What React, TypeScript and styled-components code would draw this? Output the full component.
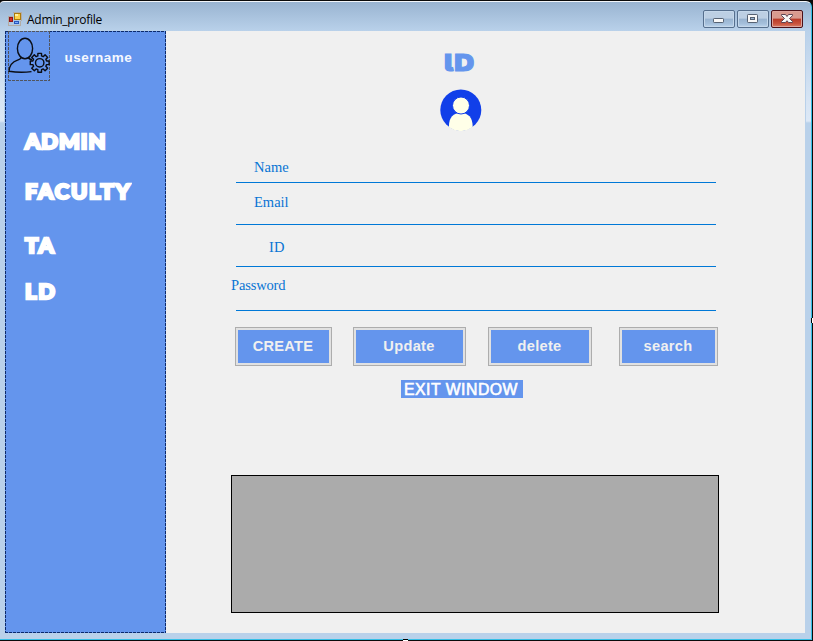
import React from "react";
import styled, { createGlobalStyle } from "styled-components";

const Global = createGlobalStyle`
  * { box-sizing: border-box; }
  body { margin: 0; overflow: hidden; background: #000; }
`;

const Window = styled.div`
  position: relative;
  width: 813px;
  height: 641px;
  padding: 1px 1px 1px 0;
  background: #0a0a0a;
`;

const Frame = styled.div`
  height: 639px;
  display: flex;
  flex-direction: column;
  padding: 0 6px 6px 5px;
  border-top: 1px solid #f2f6fa;
  border-right: 1px solid #35bfe6;
  border-bottom: 1px solid #35bfe6;
  border-radius: 4px 6px 0 0;
  background:
    linear-gradient(#99b4d1, #b9d1ea 29px, #d8e5f4 100px, #dce8f6 119px, transparent 121px) 0 0 / 4px 121px no-repeat,
    linear-gradient(#99b4d1, #b9d1ea 29px, #d8e5f4 100px, #dce8f6 119px, transparent 121px) right 0 top 0 / 5px 121px no-repeat,
    linear-gradient(#99b4d1, #b9d1ea 29px);
`;

const TitleBar = styled.header`
  height: 29px;
  flex: none;
  display: flex;
  align-items: flex-start;
  padding: 8px 2px 0 3px;
`;

const FormIconSlot = styled.span`
  display: flex;
  margin-top: 2px;
`;

const Caption = styled.span`
  flex: 1;
  margin: 1px 0 0 5px;
  font: 12px/18px "Open Sans", sans-serif;
  letter-spacing: -0.22px;
  color: #000;
`;

const CaptionButtons = styled.div`
  display: flex;
  gap: 2px;
`;

const CaptionButton = styled.button<{ $close?: boolean }>`
  width: 32px;
  height: 18px;
  padding: 0;
  display: flex;
  border: 1px solid ${(p) => (p.$close ? "#4c1018" : "#566f8d")};
  border-radius: 2px;
  box-shadow: inset 0 0 0 1px ${(p) => (p.$close ? "#dda49d" : "#c5d8eb")};
  background: ${(p) =>
    p.$close
      ? "linear-gradient(#d99a8f 0 45%, #b93a28 50%, #c9543f 80%, #d98068)"
      : "linear-gradient(#bccfe3 0 45%, #98b3d0 50%, #a5c0dc 80%, #bdd5ec)"};
`;

const Client = styled.div`
  flex: 1;
  display: flex;
  background: #f0f0f0;
`;

const dash = "#0b2a6b 0 3px, #6495ed 3px 4px";
const Sidebar = styled.aside`
  width: 161px;
  padding: 0 0 0 3px;
  background:
    repeating-linear-gradient(90deg, ${dash}) 0 0 / 100% 1px no-repeat,
    repeating-linear-gradient(90deg, ${dash}) 0 100% / 100% 1px no-repeat,
    repeating-linear-gradient(180deg, ${dash}) 0 0 / 1px 100% no-repeat,
    repeating-linear-gradient(180deg, ${dash}) 100% 0 / 1px 100% no-repeat,
    #6495ed;
`;

const User = styled.div`
  display: flex;
  height: 50px;
`;

const gdash = "#51555e 0 3px, #6495ed 3px 4px";
const UserPicture = styled.div`
  width: 42px;
  height: 50px;
  background:
    repeating-linear-gradient(90deg, ${gdash}) 0 0 / 100% 1px no-repeat,
    repeating-linear-gradient(90deg, ${gdash}) 0 100% / 100% 1px no-repeat,
    repeating-linear-gradient(180deg, ${gdash}) 0 0 / 1px 100% no-repeat,
    repeating-linear-gradient(180deg, ${gdash}) 100% 0 / 1px 100% no-repeat;
`;

const UserName = styled.span`
  margin: 18px 0 0 14.5px;
  font: bold 13.5px/17px "Liberation Sans", Arial, sans-serif;
  letter-spacing: 0.5px;
  color: #f5f8ff;
`;

const NavItem = styled.div<{ $top: number; $spacing: number }>`
  height: 26px;
  width: fit-content;
  margin: ${(p) => p.$top}px 0 0 17px;
  font: 900 20.5px/26px Lato, sans-serif;
  letter-spacing: ${(p) => p.$spacing}px;
  white-space: nowrap;
  color: #fff;
  -webkit-text-stroke: 2.4px #fff;
  transform: scaleX(1.07);
  transform-origin: 0 0;
`;

const Main = styled.main`
  flex: 1;
  padding: 19px 0 0 65px;
`;

const Heading = styled.h1`
  width: fit-content;
  margin: 0 0 0 213px;
  height: 26px;
  font: 900 23px/27px Inter, sans-serif;
  font-feature-settings: "cv05";
  letter-spacing: 0.8px;
  color: #6495ed;
  -webkit-text-stroke: 1px #6495ed;
  transform: scaleX(1.2);
  transform-origin: 0 0;
`;

const Avatar = styled.svg`
  display: block;
  margin: 13px 0 21px 209px;
`;

const Field = styled.div<{ $height: number; $top: number; $indent: number }>`
  display: flex;
  flex-direction: column;
  justify-content: space-between;
  width: 485px;
  height: ${(p) => p.$height}px;
  padding-top: ${(p) => p.$top}px;
  label { margin-left: ${(p) => p.$indent}px; }
`;

const Underline = styled.div`
  height: 1px;
  margin-left: 5px;
  background: #0078d7;
`;

const Label = styled.label<{ $spacing: number }>`
  display: block;
  font: 14.5px/18px "Liberation Serif", serif;
  letter-spacing: ${(p) => p.$spacing}px;
  color: #0874d4;
`;

const Actions = styled.div`
  display: grid;
  grid-template-columns: 97px 113px 104px 99px;
  column-gap: 21px;
  margin: 16px 0 0 4px;
  & > :nth-child(3) { margin-left: 1px; margin-right: -1px; }
  & > :nth-child(4) { margin-left: 7px; margin-right: -7px; }
`;

const ActionButton = styled.button`
  height: 39px;
  padding: 0 1px 1px 0;
  border: 1px solid #adadad;
  box-shadow: inset 0 0 0 2px #e1e1e1;
  background: #6495ed;
  color: #f0f0f0;
  font: bold 14.6px/18px "Liberation Sans", Arial, sans-serif;
  letter-spacing: 0.3px;
`;

const ExitLabel = styled.div`
  width: 122px;
  height: 18px;
  margin: 14px 0 0 170px;
  padding-left: 3px;
  background: #6495ed;
  color: #fff;
  font: 15.8px/19px "Liberation Sans", Arial, sans-serif;
  -webkit-text-stroke: 0.6px #fff;
  letter-spacing: 0.5px;
  white-space: nowrap;
`;

const DataGrid = styled.div`
  width: 488px;
  height: 138px;
  margin-top: 77px;
  border: 1px solid #000;
  background: #ababab;
`;

const Handle = styled.i<{ $x: number; $y: number; $w: number; $h: number }>`
  position: absolute;
  left: ${(p) => p.$x}px;
  top: ${(p) => p.$y}px;
  width: ${(p) => p.$w}px;
  height: ${(p) => p.$h}px;
  border: solid #000;
  border-width: ${(p) => (p.$w > p.$h ? "1px 0 0" : "0 0 0 1px")};
  background: #fff;
`;

function FormIcon() {
  return (
    <svg width="14" height="14" viewBox="0 0 14 14" shapeRendering="crispEdges">
      <path d="M.5 4.5h4M.5 4v9.5h12V9M5 .5h8v8" fill="none" stroke="#b3aca5" />
      <rect x="6.5" y="1.5" width="6" height="6" fill="#fbd14b" stroke="#ad7b0b" />
      <path d="M7 2h3v2H7z" fill="#fff0a0" />
      <rect x="1.5" y="5.5" width="3" height="4" fill="#d92c25" stroke="#901517" />
      <rect x="6.5" y="9.5" width="4" height="2" fill="#7cacff" stroke="#2858bf" />
    </svg>
  );
}

function MinimizeIcon() {
  return (
    <svg width="30" height="16" viewBox="0 0 30 16">
      <rect x="9.5" y="7.5" width="10" height="4" rx="0.7" fill="#f8f8f8" stroke="#566273" />
    </svg>
  );
}

function MaximizeIcon() {
  return (
    <svg width="30" height="16" viewBox="0 0 30 16">
      <rect x="9.5" y="3.5" width="10" height="8" rx="0.7" fill="#f8f8f8" stroke="#566273" />
      <rect x="12.5" y="6.5" width="4" height="2" fill="#9cb6d3" stroke="#566273" />
    </svg>
  );
}

function CloseIcon() {
  return (
    <svg width="30" height="16" viewBox="0 0 30 16">
      <path
        d="M9.5 3.5h4l1.5 2 1.5-2h4v1.2L17.5 7.5l3 3v1h-4L15 9.7l-1.5 1.8h-4v-1l3-3-3-3z"
        fill="#f8f8f8"
        stroke="#5d4452"
      />
    </svg>
  );
}

const gear = (() => {
  const points: string[] = [];
  for (let i = 0; i < 8; i++) {
    const at = (deg: number, r: number) => {
      const a = ((i * 45 + deg) * Math.PI) / 180;
      return `${(31.7 + r * Math.cos(a)).toFixed(2)},${(31.8 + r * Math.sin(a)).toFixed(2)}`;
    };
    points.push(at(-15, 7.1), at(-11, 9.6), at(11, 9.6), at(15, 7.1));
  }
  return points.join(" ");
})();

function UserGearIcon() {
  return (
    <svg width="42" height="50" viewBox="0 0 42 50" fill="none" stroke="#0a0d14" strokeWidth="1.4">
      <ellipse cx="17" cy="17.5" rx="7.6" ry="10.2" />
      <path d="M13 26.5c0 1.5-1.5 2-3.5 2.7C3.5 31.2 1.5 34.5 1 40.2c7.5 1.3 15 1.4 22.5.4M20.5 26.5c.3 1.5 1.5 1.8 3.5 2.3" />
      <polygon points={gear} strokeLinejoin="round" />
      <circle cx="31.7" cy="31.8" r="4.2" />
    </svg>
  );
}

const fields = [
  { name: "Name", height: 31, top: 6, indent: 23, spacing: 0.05 },
  { name: "Email", height: 42, top: 10, indent: 23, spacing: 0 },
  { name: "ID", height: 42, top: 13, indent: 38, spacing: 0.2 },
  { name: "Password", height: 44, top: 9, indent: 0, spacing: -0.15 },
];

export default function App() {
  return (
    <>
      <Global />
      <Window>
        <Frame>
          <TitleBar>
            <FormIconSlot><FormIcon /></FormIconSlot>
            <Caption>Admin_profile</Caption>
            <CaptionButtons>
              <CaptionButton aria-label="Minimize"><MinimizeIcon /></CaptionButton>
              <CaptionButton aria-label="Maximize"><MaximizeIcon /></CaptionButton>
              <CaptionButton $close aria-label="Close"><CloseIcon /></CaptionButton>
            </CaptionButtons>
          </TitleBar>
          <Client>
            <Sidebar>
              <User>
                <UserPicture><UserGearIcon /></UserPicture>
                <UserName>username</UserName>
              </User>
              <NavItem $top={47} $spacing={0.9}>ADMIN</NavItem>
              <NavItem $top={24} $spacing={1.7}>FACULTY</NavItem>
              <NavItem $top={28} $spacing={1.6}>TA</NavItem>
              <NavItem $top={20} $spacing={1.6}>LD</NavItem>
            </Sidebar>
            <Main>
              <Heading>lD</Heading>
              <Avatar width="42" height="42" viewBox="0 0 42 42">
                <circle cx="20.8" cy="21" r="20.5" fill="#113fe9" />
                <path d="M9 38.3C8.5 29 13 24 20.8 24S33 29 32.6 38.3A20.5 20.5 0 0 1 9 38.3z" fill="#ffffe8" />
                <circle cx="21" cy="16.5" r="8.5" fill="#ffffe8" stroke="#113fe9" strokeWidth="1" />
              </Avatar>
              {fields.map((f) => (
                <Field key={f.name} $height={f.height} $top={f.top} $indent={f.indent}>
                  <Label $spacing={f.spacing}>{f.name}</Label>
                  <Underline />
                </Field>
              ))}
              <Actions>
                <ActionButton>CREATE</ActionButton>
                <ActionButton>Update</ActionButton>
                <ActionButton>delete</ActionButton>
                <ActionButton>search</ActionButton>
              </Actions>
              <ExitLabel>EXIT WINDOW</ExitLabel>
              <DataGrid />
            </Main>
          </Client>
        </Frame>
        <Handle $x={811} $y={318} $w={2} $h={5} />
        <Handle $x={403} $y={639} $w={5} $h={2} />
      </Window>
    </>
  );
}
